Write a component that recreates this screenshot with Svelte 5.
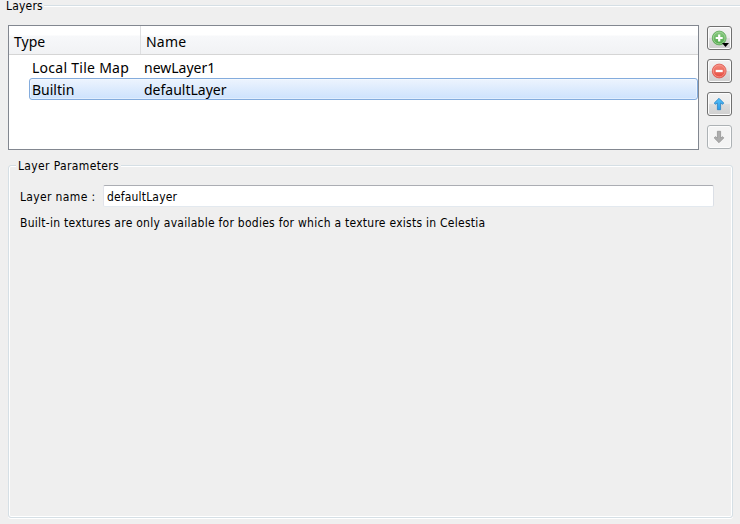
<script>
  const layers = [
    { type: 'Local Tile Map', name: 'newLayer1' },
    { type: 'Builtin', name: 'defaultLayer' }
  ];
  let selected = $state(1);
  let layerName = $derived(layers[selected].name);
</script>

<main>
  <header><span class="caption">Layers</span><i></i></header>

  <section class="top">
    <div class="table">
      <div class="head">
        <div class="type">Type</div>
        <div class="name">Name</div>
      </div>
      {#each layers as layer, i}
        <button class="row" class:selected={i === selected} onclick={() => (selected = i)}>
          <span class="cell" class:wide={layer.type.length > 10}>{layer.type}</span>
          <span>{layer.name}</span>
        </button>
      {/each}
    </div>

    <div class="tools">
      <button class="tool" aria-label="Add layer">
        <svg width="25" height="25" viewBox="0 0 25 25">
          <defs>
            <linearGradient id="g" x1="0" y1="0" x2="0" y2="1">
              <stop offset="0" stop-color="#8ccb83" /><stop offset="1" stop-color="#4fa84a" />
            </linearGradient>
          </defs>
          <circle cx="12.2" cy="12" r="6.9" fill="url(#g)" stroke="#62aa5e" stroke-width=".9" />
          <circle cx="12.2" cy="12" r="5.9" fill="none" stroke="#a5d69c" stroke-width=".8" />
          <path d="M12.2 8.5v7M8.7 12h7" stroke="#fff" stroke-width="2.2" />
          <path d="M15 17h7l-3.5 4z" fill="#000" />
        </svg>
      </button>
      <button class="tool" aria-label="Remove layer">
        <svg width="25" height="25" viewBox="0 0 25 25">
          <defs>
            <linearGradient id="r" x1="0" y1="0" x2="0" y2="1">
              <stop offset="0" stop-color="#f58b7d" /><stop offset="1" stop-color="#e4483d" />
            </linearGradient>
          </defs>
          <circle cx="12.2" cy="12" r="6.9" fill="url(#r)" stroke="#dc5b54" stroke-width=".9" />
          <circle cx="12.2" cy="12" r="5.9" fill="none" stroke="#f59d92" stroke-width=".8" />
          <path d="M8.7 12h7" stroke="#fff" stroke-width="2.3" />
        </svg>
      </button>
      <button class="tool" aria-label="Move layer up">
        <svg width="25" height="25" viewBox="0 0 25 25">
          <defs>
            <linearGradient id="b" x1="0" y1="0" x2="0" y2="1">
              <stop offset="0" stop-color="#55c1f8" /><stop offset="1" stop-color="#2b9bea" />
            </linearGradient>
          </defs>
          <path d="M12 6.3l4.8 4.8-1.1 1.2-2.1-1.3v6.7h-3.2V11l-2.1 1.3-1.1-1.2z" fill="url(#b)" stroke="#2b83c4" stroke-width=".8" />
        </svg>
      </button>
      <button class="tool off" aria-label="Move layer down" disabled>
        <svg width="25" height="25" viewBox="0 0 25 25">
          <path d="M12 17.7l4.8-4.8-1.1-1.2-2.1 1.3V6.3h-3.2V13l-2.1-1.3-1.1 1.2z" fill="#acacac" stroke="#969696" stroke-width=".8" />
        </svg>
      </button>
    </div>
  </section>

  <fieldset>
    <legend>Layer Parameters</legend>
    <div class="field">
      <span class="lab">Layer name :</span>
      <div class="input">{layerName}</div>
    </div>
    <p>Built-in textures are only available for bodies for which a texture exists in Celestia</p>
  </fieldset>
</main>

<style>
  :global(body) { margin: 0; background: #efefef; }
  main {
    box-sizing: border-box; width: 740px; height: 524px; overflow: hidden;
    display: flex; flex-direction: column; background: #efefef; color: #000;
    font: 12px/14px 'DejaVu Sans Condensed', 'DejaVu Sans', sans-serif; font-stretch: condensed;
  }
  header { display: flex; height: 25px; padding-left: 6px; }
  .caption { margin-top: -1px; height: 14px; letter-spacing: .2px; }
  header i { flex: 1; height: 1px; margin: 5px 0 0 1px; background: #d5dfe5; border-bottom: 1px solid #fff; }
  .top { display: flex; height: 125px; padding: 0 8px; gap: 8px; }
  .table {
    box-sizing: border-box; width: 691px; height: 125px; border: 1px solid #828790;
    background: #fff; font: 14px/22px 'Noto Sans', sans-serif;
  }
  .head {
    display: flex; height: 28px; margin-bottom: 1px; line-height: 32px; border-bottom: 1px solid #d5d5d5;
    background: linear-gradient(#fff 0 9px, #f7f8fa 10px, #f1f2f4);
  }
  .type { box-sizing: border-box; width: 132px; padding-left: 5px; border-right: 1px solid #dedfe1; }
  .name { padding-left: 5px; letter-spacing: .2px; }
  .row {
    box-sizing: border-box; display: flex; width: 669px; height: 22px; margin: 0 0 0 20px; padding: 0 0 0 2px;
    border: 1px solid transparent; border-radius: 3px; background: none; font: inherit; line-height: 22px;
    color: #000; text-align: left; align-items: flex-start;
  }
  .row.selected {
    border-color: #84acdd; background: linear-gradient(#edf4fe, #cde2fd); box-shadow: inset 0 0 0 1px #ffffff66;
  }
  .cell { width: 112px; }
  .wide { letter-spacing: .27px; }
  .tools { display: flex; flex-direction: column; gap: 8px; padding-top: 1px; }
  .tool {
    box-sizing: border-box; width: 25px; height: 24px; padding: 0; border: 1px solid #707070; border-radius: 3px;
    background: linear-gradient(#f2f2f2, #ebebeb 49%, #dddddd 50%, #cfcfcf); box-shadow: inset 0 0 0 1px #fcfcfc;
    margin-bottom: 1px;
  }
  .tool.off { border-color: #adb2b5; background: #f4f4f4; }
  .tool svg { display: block; margin: -1px; }
  fieldset {
    box-sizing: border-box; width: 725px; height: 360px; margin: 8px 0 0 8px; padding: 12px 18px 0 11px;
    border: 1px solid #d5dfe5; border-radius: 3px; min-width: 0;
    box-shadow: inset 0 0 0 1px #fff, 0 1px #fff;
  }
  legend { box-sizing: border-box; height: 15px; padding: 1px 2px 0; margin-left: -4px; background: #efefef; letter-spacing: .36px; }
  .field { display: flex; align-items: center; height: 22px; }
  .lab { width: 83px; padding-top: 1px; letter-spacing: .35px; }
  .input {
    box-sizing: border-box; flex: 1; height: 22px; padding: 4px 0 0 3px; border: 1px solid #e2e3ea; letter-spacing: .17px;
    border-top-color: #abadb3; border-right-color: #dbdfe6; border-bottom-color: #e3e9ef; border-radius: 2px; background: #fff;
  }
  p { margin: 9px 0 0; white-space: nowrap; letter-spacing: .26px; }
</style>
